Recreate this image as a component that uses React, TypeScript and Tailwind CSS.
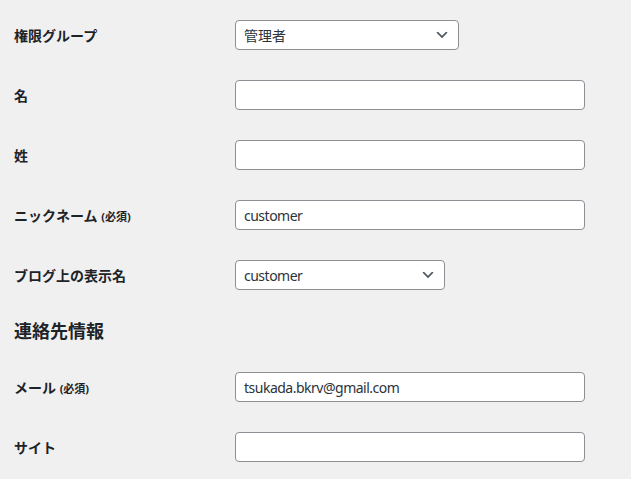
import React from "react";

const font = { fontFamily: '"Noto Sans", "Noto Sans CJK JP", sans-serif' };

function Chevron() {
  return (
    <svg width="16" height="16" viewBox="0 0 20 20" className="text-[#50575e]">
      <path d="M5 6l5 5 5-5 2 1-7 7-7-7z" fill="currentColor" />
    </svg>
  );
}

function Row({ label, children }: { label: React.ReactNode; children: React.ReactNode }) {
  return (
    <div className="flex items-center h-[60px]">
      <div className="w-[235px] pl-[14px] text-[14px] font-bold text-[#1d2327]">{label}</div>
      <div>{children}</div>
    </div>
  );
}

function Input({ value = "" }: { value?: string }) {
  return (
    <div className="w-[350px] h-[30px] bg-white border border-[#8c8f94] rounded-[4px] flex items-center px-[8px] text-[14px] tracking-[-0.5px] text-[#2c3338]">
      {value}
    </div>
  );
}

const Req = () => <span className="text-[11px] font-bold">(必須)</span>;

export default function App() {
  return (
    <div className="w-[631px] h-[479px] bg-[#f0f0f1] overflow-hidden pt-[5px]" style={font}>
      <Row label="権限グループ">
        <div className="w-[224px] h-[30px] bg-white border border-[#8c8f94] rounded-[4px] flex items-center justify-between pl-[8px] pr-[8px] text-[14px] text-[#2c3338]">
          <span>管理者</span>
          <Chevron />
        </div>
      </Row>
      <Row label="名"><Input /></Row>
      <Row label="姓"><Input /></Row>
      <Row label={<>ニックネーム <Req /></>}><Input value="customer" /></Row>
      <Row label="ブログ上の表示名">
        <div className="w-[210px] h-[30px] bg-white border border-[#8c8f94] rounded-[4px] flex items-center justify-between pl-[8px] pr-[8px] text-[14px] tracking-[-0.5px] text-[#2c3338]">
          <span>customer</span>
          <Chevron />
        </div>
      </Row>
      <h2 className="pl-[14px] h-[52px] flex items-center text-[18px] font-bold text-[#1d2327]">連絡先情報</h2>
      <Row label={<>メール <Req /></>}><Input value="tsukada.bkrv@gmail.com" /></Row>
      <Row label="サイト"><Input /></Row>
    </div>
  );
}
